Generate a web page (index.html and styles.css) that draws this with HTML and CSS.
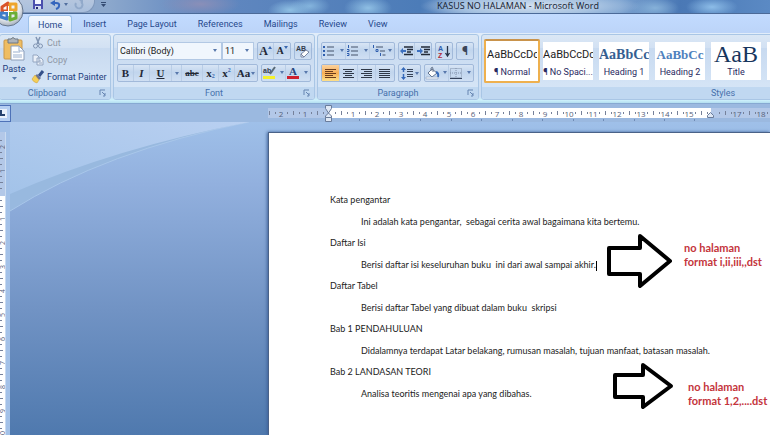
FILE: index.html
```html
<!DOCTYPE html>
<html lang="id">
<head>
<meta charset="utf-8">
<title>KASUS NO HALAMAN - Microsoft Word</title>
<link rel="stylesheet" href="styles.css">
</head>
<body>
<div class="app">
  <header class="titlebar">
    <button class="orb" aria-label="Office">
      <svg width="32" height="32" viewBox="0 0 32 32">
        <defs><radialGradient id="orb" cx=".45" cy=".35" r=".65"><stop offset="0" stop-color="#fff"/><stop offset=".7" stop-color="#e3e7ec"/><stop offset="1" stop-color="#a5afbc"/></radialGradient></defs>
        <circle cx="16" cy="16" r="15" fill="url(#orb)" stroke="#66768c"/>
        <g fill="none" stroke-width="3" stroke-linejoin="round">
          <path d="M10 12l6-4v8h-6z" stroke="#d9532a"/>
          <path d="M18 9h6v6h-6z" stroke="#eea52b"/>
          <path d="M9 18h6v6l-6-2z" stroke="#3e7dc9"/>
          <path d="M18 18h6v5l-6 2z" stroke="#6cae35"/>
        </g>
        <path d="M16.500 11v10M12 16.500h9" stroke="#fff"/>
      </svg>
    </button>
    <div class="quick">
      <button class="plain" aria-label="Save"><svg width="12" height="12" viewBox="0 0 12 12"><path d="M1 0h10v9H1z" fill="#4b50ae"/><path d="M3 0h6v4H3z" fill="#f2f5ff"/><path d="M3 6h6v3H3z" fill="#d4dcf0"/><path d="M4 7h2v2H4z" fill="#252b70"/></svg></button>
      <button class="plain" aria-label="Undo"><svg width="18" height="11" viewBox="0 0 18 11"><path d="M3 3h3q4 0 3 3 0 2-3 3" fill="none" stroke="#3465bd" stroke-width="2"/><path d="M0 3l5-3v6z" fill="#3465bd"/><path d="M14 3h4l-2 3z" fill="#526f9f"/></svg></button>
      <button class="plain" aria-label="Redo"><svg width="11" height="11" viewBox="0 0 11 11"><path d="M7 2a3.500 3.500 0 1 1-5 1" fill="none" stroke="#91a9ca" stroke-width="2"/><path d="M5 0h4v4z" fill="#91a9ca"/></svg></button>
    </div>
    <button class="plain more" aria-label="Customize toolbar"><svg width="5" height="6" viewBox="0 0 5 6"><path d="M0 0h5v1H0zM0 2h5L2.500 5z" fill="#344b72"/></svg></button>
    <h1 class="title">KASUS NO HALAMAN - Microsoft Word</h1>
  </header>

  <nav class="tabs">
    <a class="tab active" href="#">Home</a>
    <a class="tab" href="#">Insert</a>
    <a class="tab" href="#">Page Layout</a>
    <a class="tab" href="#">References</a>
    <a class="tab" href="#">Mailings</a>
    <a class="tab" href="#">Review</a>
    <a class="tab" href="#">View</a>
  </nav>

  <div class="ribbon">
    <section class="group clipboard">
      <div class="tools">
        <button class="plain paste">
          <svg width="22" height="24" viewBox="0 0 22 24"><rect x="1" y="3" width="18" height="19" rx="1" fill="#efbd62" stroke="#c9974a"/><path d="M5 2h3q2-3 4 0h3v4H5z" fill="#aeb4bb" stroke="#6f7983"/><path d="M8 9h8l5 5v9H8z" fill="#fff" stroke="#8b9db8"/><path d="M16 9v5h5M10 15h7M10 18h9M10 20h9" fill="none" stroke="#9bb0cf"/></svg>
          <span>Paste</span>
          <svg width="5" height="3" viewBox="0 0 5 3"><path d="M0 0h5L2.500 3z" fill="#5b7fb0"/></svg>
        </button>
        <div class="clip-list">
          <button class="plain off"><svg width="12" height="12" viewBox="0 0 12 12"><path d="M4 0l3 7M8 0L5 7" stroke="#8195b3" stroke-width="1.500"/><circle cx="3.500" cy="9" r="2" fill="none" stroke="#8195b3"/><circle cx="8.500" cy="9" r="2" fill="none" stroke="#8195b3"/></svg>Cut</button>
          <button class="plain off"><svg width="12" height="12" viewBox="0 0 12 12"><path d="M1 1h4l2 2v5H1zM5 4h4l2 2v5H5z" fill="#e9eff8" stroke="#93a5c0"/><path d="M7 7h2M7 9h3" stroke="#93a5c0"/></svg>Copy</button>
          <button class="plain"><svg width="12" height="12" viewBox="0 0 12 12"><path d="M11 0L7 5" stroke="#34508a" stroke-width="3"/><path d="M5 3l4 4-2 2-4-4z" fill="#6a7396"/><path d="M3 4l4 5-2 3q-4-1-5-4z" fill="#f5cf58" stroke="#c79b35" stroke-width=".5"/></svg>Format Painter</button>
        </div>
      </div>
      <footer class="caption"><span>Clipboard</span><button class="plain launch" aria-label="Clipboard options"><svg width="6" height="6" viewBox="0 0 6 6"><path d="M0 5V0h5M2 2l3 3M5 3v3H3" fill="none" stroke="#6685b1"/></svg></button></footer>
    </section>

    <section class="group font">
      <div class="rows">
        <div class="row">
          <div class="combos">
            <label class="combo wide"><select aria-label="Font"><option>Calibri (Body)</option></select></label>
            <label class="combo"><select aria-label="Font size"><option>11</option></select></label>
          </div>
          <div class="set">
            <button class="b serif big" aria-label="Grow font">A<svg width="4" height="3" viewBox="0 0 4 3"><path d="M0 3h4L2 0z" fill="#3b68b0"/></svg></button>
            <button class="b serif small" aria-label="Shrink font">A<svg width="4" height="3" viewBox="0 0 4 3"><path d="M0 0h4L2 3z" fill="#3b68b0"/></svg></button>
          </div>
          <div class="set">
            <button class="b" aria-label="Clear formatting"><svg width="14" height="13" viewBox="0 0 14 13"><text x="0" y="6" class="ab">AB</text><path d="M5 9l5-4 3 2-5 5H5z" fill="#fff" stroke="#7986a3"/><path d="M5 9l3 3" stroke="#7986a3"/></svg></button>
          </div>
        </div>
        <div class="row">
          <div class="set">
            <button class="b serif">B</button>
            <button class="b serif italic">I</button>
            <button class="b serif under">U</button>
            <button class="b arrow" aria-label="Underline style"><svg width="4" height="3" viewBox="0 0 4 3"><path d="M0 0h4L2 3z" fill="#5878ac"/></svg></button>
            <button class="b serif strike">abc</button>
            <button class="b serif">x<sub>2</sub></button>
            <button class="b serif">x<sup>2</sup></button>
            <button class="b serif case">Aa<svg width="4" height="3" viewBox="0 0 4 3"><path d="M0 0h4L2 3z" fill="#5878ac"/></svg></button>
          </div>
          <div class="set">
            <button class="b pick" aria-label="Highlight"><svg width="22" height="14" viewBox="0 0 22 14"><text x="0" y="7" class="ab">ab</text><path d="M12 1L7 8" stroke="#596a78" stroke-width="2"/><path d="M0 10h12v3H0z" fill="#f3f02c"/><path d="M17 5h4l-2 3z" fill="#5878ac"/></svg></button>
            <button class="b pick" aria-label="Font color"><svg width="22" height="14" viewBox="0 0 22 14"><text x="2" y="9" class="fc">A</text><path d="M0 10h12v3H0z" fill="#ce1f2e"/><path d="M17 5h4l-2 3z" fill="#5878ac"/></svg></button>
          </div>
        </div>
      </div>
      <footer class="caption"><span>Font</span><button class="plain launch" aria-label="Font options"><svg width="6" height="6" viewBox="0 0 6 6"><path d="M0 5V0h5M2 2l3 3M5 3v3H3" fill="none" stroke="#6685b1"/></svg></button></footer>
    </section>

    <section class="group paragraph">
      <div class="rows">
        <div class="row">
          <div class="set">
            <button class="b list" aria-label="Bullets"><svg width="21" height="12" viewBox="0 0 21 12"><path d="M0 1h2v2H0zM0 5h2v2H0zM0 9h2v2H0z" fill="#2f5eae"/><path d="M4 2h7M4 6h7M4 10h7" stroke="#44536b"/><path d="M17 4h4l-2 3z" fill="#5878ac"/></svg></button>
            <button class="b list" aria-label="Numbering"><svg width="21" height="12" viewBox="0 0 21 12"><path d="M1.500 0v3M0 4.500h2v2H0M0 8.500h2v2H0" fill="none" stroke="#2f5eae"/><path d="M4 2h7M4 6h7M4 10h7" stroke="#44536b"/><path d="M17 4h4l-2 3z" fill="#5878ac"/></svg></button>
            <button class="b list" aria-label="Multilevel list"><svg width="21" height="12" viewBox="0 0 21 12"><path d="M1.500 0v3M4 4.500h2v2H4zM8.500 8v3" fill="none" stroke="#2f5eae"/><path d="M4 2h7M8 6h5M10.500 10h3" stroke="#44536b"/><path d="M16 4h4l-2 3z" fill="#5878ac"/></svg></button>
          </div>
          <div class="set">
            <button class="b" aria-label="Decrease indent"><svg width="13" height="11" viewBox="0 0 13 11"><path d="M4 1h9M7 3.500h6M7 6h4M4 8.500h9" stroke="#232b39" stroke-width="1.500"/><path d="M0 5l3-3v2h3v2H3v2z" fill="#3d70c0"/></svg></button>
            <button class="b" aria-label="Increase indent"><svg width="13" height="11" viewBox="0 0 13 11"><path d="M4 1h9M7 3.500h6M7 6h4M4 8.500h9" stroke="#232b39" stroke-width="1.500"/><path d="M6 5L3 2v2H0v2h3v2z" fill="#3d70c0"/></svg></button>
          </div>
          <div class="set">
            <button class="b" aria-label="Sort"><svg width="12" height="13" viewBox="0 0 12 13"><text x="0" y="6" class="sa">A</text><text x="0" y="13" class="sz">Z</text><path d="M9.500 1v9M7.500 8l2 3 2-3" fill="none" stroke="#263247" stroke-width="1.300"/></svg></button>
          </div>
          <div class="set">
            <button class="b pilcrow">¶</button>
          </div>
        </div>
        <div class="row">
          <div class="set">
            <button class="b align on" aria-label="Align left"><svg width="12" height="11" viewBox="0 0 12 11"><path d="M0 1.500h11M0 3.500h8M0 5.500h11M0 7.500h8M0 9.500h11" stroke="#6b3c1c"/></svg></button>
            <button class="b align" aria-label="Center"><svg width="12" height="11" viewBox="0 0 12 11"><path d="M0 1.500h11M2 3.500h7M0 5.500h11M2 7.500h7M0 9.500h11" stroke="#2f3847"/></svg></button>
            <button class="b align" aria-label="Align right"><svg width="12" height="11" viewBox="0 0 12 11"><path d="M0 1.500h11M3 3.500h8M0 5.500h11M3 7.500h8M0 9.500h11" stroke="#2f3847"/></svg></button>
            <button class="b align" aria-label="Justify"><svg width="12" height="11" viewBox="0 0 12 11"><path d="M0 1.500h11M0 3.500h11M0 5.500h11M0 7.500h11M0 9.500h11" stroke="#2f3847"/></svg></button>
          </div>
          <div class="set">
            <button class="b spacing" aria-label="Line spacing"><svg width="18" height="13" viewBox="0 0 18 13"><path d="M2.500 2v9" stroke="#3569b9" stroke-width="1.500" stroke-dasharray="3 2"/><path d="M0 3l2.500-3L5 3zM0 10l2.500 3L5 10z" fill="#3569b9"/><path d="M6 2.500h6M6 4.500h6M6 7.500h6M6 9.500h6" stroke="#384458"/><path d="M14 5h4l-2 3z" fill="#5878ac"/></svg></button>
          </div>
          <div class="set">
            <button class="b pick" aria-label="Shading"><svg width="22" height="13" viewBox="0 0 22 13"><path d="M2 6l4-4 5 4-5 4z" fill="#fff" stroke="#66758e"/><path d="M5 4V1q2-2 2 1v3" fill="none" stroke="#66758e"/><path d="M10 5q3 1 2 5" fill="none" stroke="#3569b9" stroke-width="2"/><path d="M0 10h12v2H0z" fill="#eef3fa" stroke="#8296b5" stroke-width=".5"/><path d="M17 4h4l-2 3z" fill="#5878ac"/></svg></button>
            <button class="b pick" aria-label="Borders"><svg width="22" height="13" viewBox="0 0 22 13"><path d="M.5 1.500h11v9H.5zM6 1v10M0 6h12" fill="none" stroke="#8392ab" stroke-dasharray="1 1"/><path d="M0 11.500h12" stroke="#35435c"/><path d="M17 4h4l-2 3z" fill="#5878ac"/></svg></button>
          </div>
        </div>
      </div>
      <footer class="caption"><span>Paragraph</span><button class="plain launch" aria-label="Paragraph options"><svg width="6" height="6" viewBox="0 0 6 6"><path d="M0 5V0h5M2 2l3 3M5 3v3H3" fill="none" stroke="#6685b1"/></svg></button></footer>
    </section>

    <section class="group styles">
      <div class="gallery">
        <button class="style chosen"><span class="sample">AaBbCcDc</span><span>¶ Normal</span></button>
        <button class="style"><span class="sample">AaBbCcDc</span><span>¶ No Spaci...</span></button>
        <button class="style"><span class="sample h1">AaBbCc</span><span>Heading 1</span></button>
        <button class="style"><span class="sample h2">AaBbCc</span><span>Heading 2</span></button>
        <button class="style"><span class="sample ttl">AaB</span><span>Title</span></button>
        <button class="style"><span class="sample sub">AaBbCc</span><span>Subtitle</span></button>
      </div>
      <footer class="caption"><span>Styles</span></footer>
    </section>
  </div>

  <main class="work">
    <div class="ruler-row">
      <button class="tabstop" aria-label="Tab stop"><svg width="5" height="6" viewBox="0 0 5 6"><path d="M1 0v5h4" fill="none" stroke="#26436f" stroke-width="2"/></svg></button>
      <div class="hruler">
        <i>2</i><i>1</i><i></i><i>1</i><i>2</i><i>3</i><i>4</i><i>5</i><i>6</i><i>7</i><i>8</i><i>9</i><i>10</i><i>11</i><i>12</i><i>13</i><i>14</i><i>15</i><i></i><i>17</i><i>18</i><i></i>
        <svg class="markers" width="400" height="18" viewBox="0 0 400 18"><path d="M1.500.5h6v3l-3 4.500-3-4.500zM1.500 12.500v-1.500l3-3 3 3v1.500zM1.500 12.500h6v4h-6zM383.500 12.500v-2l3-3 3 3v2z" fill="#dfe8f5" stroke="#6a7c9b"/><path d="M35.500 14v2M65.500 14v2M96.500 14v2M127.500 14v2M157.500 14v2M188.500 14v2M218.500 14v2M249.500 14v2M279.500 14v2M310.500 14v2M340.500 14v2M370.500 14v2" stroke="#6f8bb5"/></svg>
      </div>
    </div>
    <div class="body">
      <div class="vruler">
        <i>2</i><i>1</i><i></i><i>1</i><i>2</i><i>3</i><i>4</i><i>5</i><i>6</i><i>7</i><i>8</i><i>9</i><i>10</i>
      </div>
      <div class="canvas">
        <svg class="swoosh" width="240" height="90" viewBox="0 0 240 90"><defs><linearGradient id="sw" x1="0" y1="1" x2="1" y2="0"><stop offset="0" stop-color="#a3c3e9"/><stop offset="1" stop-color="#b9d0f1"/></linearGradient></defs><path d="M0 0h239Q95 29 0 89z" fill="#98b9df"/><path d="M0 89Q95 29 239 0" fill="none" stroke="#a9c7ea"/><path d="M0 0h239Q105 26 0 72z" fill="url(#sw)"/></svg>
        <article class="page">
          <h2>Kata pengantar</h2>
          <p>Ini adalah kata pengantar,&nbsp; sebagai cerita awal bagaimana kita bertemu.</p>
          <h2>Daftar Isi</h2>
          <p>Berisi daftar isi keseluruhan buku&nbsp; ini dari awal sampai akhir.<span class="caret"></span></p>
          <h2>Daftar Tabel</h2>
          <p>Berisi daftar Tabel yang dibuat dalam buku&nbsp; skripsi</p>
          <h2>Bab 1 PENDAHULUAN</h2>
          <p>Didalamnya terdapat Latar belakang, rumusan masalah, tujuan manfaat, batasan masalah.</p>
          <h2>Bab 2 LANDASAN TEORI</h2>
          <p>Analisa teoritis mengenai apa yang dibahas.</p>
          <svg class="arrow-one" width="66" height="56" viewBox="0 0 66 56"><path d="M3 15h31V3l30 25-30 25V41H3z" fill="#fff" stroke="#000" stroke-width="4" stroke-linejoin="round"/></svg>
          <div class="note note-one">no halaman<br>format i,ii,iii,,dst</div>
          <svg class="arrow-two" width="62" height="48" viewBox="0 0 62 48"><path d="M3 13h28V3l28 21-28 21V35H3z" fill="#fff" stroke="#000" stroke-width="4" stroke-linejoin="round"/></svg>
          <div class="note note-two">no halaman<br>format 1,2,....dst</div>
        </article>
      </div>
    </div>
  </main>
</div>
</body>
</html>
```
FILE: styles.css
```css
* { box-sizing: border-box; }
body { margin: 0; font: 9px/12px Roboto, "Open Sans", sans-serif; color: #1d3c7c; }
.app { display: flex; flex-direction: column; height: 100vh; overflow: hidden; }
button { font: inherit; color: inherit; margin: 0; padding: 0; cursor: default; }
svg { flex: none; overflow: visible; }
.plain { display: flex; align-items: center; border: 0; background: none; }

.titlebar {
  position: relative; z-index: 2; display: flex; height: 14px; flex: none;
  border-bottom: 1px solid #4b6a98;
  background:
    radial-gradient(ellipse 22px 10px at 290px 10px, #8fc0e4, transparent),
    radial-gradient(ellipse 20px 10px at 310px 6px, #84b4dd, transparent),
    radial-gradient(ellipse 24px 12px at 368px 8px, #8fbfe4, transparent),
    radial-gradient(ellipse 40px 12px at 200px 4px, #8a8fb8, transparent),
    radial-gradient(ellipse 110px 14px at 530px 6px, #d3e0ef, #a9c4e2 60%, transparent),
    radial-gradient(ellipse 26px 10px at 712px 7px, #8dbde8, transparent),
    radial-gradient(ellipse 24px 10px at 655px 8px, #86b1d9, transparent),
    linear-gradient(90deg, #93a8c5, #8ba7cc 110px, #6288c0 200px, #4c7cb8 420px, #8fb0d8 480px, #7ba2d0 620px, #4a78b5 680px, #5b8ac4);
}
.orb { position: absolute; left: -8px; top: -5px; width: 32px; height: 32px; border: 0; background: none; }
.quick { display: flex; align-items: flex-start; gap: 6px; margin-left: 20px; padding: 0 9px 0 12px; height: 13px; border: 1px solid #8098bb; border-width: 0 1px 1px 0; border-radius: 0 0 12px 0; background: linear-gradient(#b5c6de, #a9bfdd); }
.more { margin-left: 6px; height: 10px; }
.title { position: absolute; left: 437px; top: 0; margin: 0; font: 400 9px/12px "Open Sans", sans-serif; color: #14202f; white-space: nowrap; }

.tabs { display: flex; gap: 1px; height: 19px; flex: none; padding: 1px 0 0 28px; background: linear-gradient(#c2dbff, #bcd4f8); }
.tab { padding: 0 10px; line-height: 19px; color: #26488c; text-decoration: none; white-space: nowrap; }
.tab.active { border: 1px solid #9dc1ea; border-bottom: 0; border-radius: 3px 3px 0 0; padding: 0 9px; line-height: 18px; background: linear-gradient(#f4f9ff, #dfe9f7); }

.ribbon { display: flex; gap: 2px; height: 70px; flex: none; padding: 1px 0 3px; background: linear-gradient(#e1edfa, #c9dcf2 90%, #cdf1fb 96%, #b3def0); overflow: hidden; }
.group { display: flex; flex-direction: column; flex: none; border: 1px solid #a9c6e5; border-radius: 3px; background: linear-gradient(#dbe7f5 0, #d2e1f3 20%, #c8daf0 21%, #d9e8f8 100%); overflow: hidden; }
.clipboard { width: 112px; margin-left: -1px; }
.font { width: 202px; }
.paragraph { width: 162px; }
.styles { width: 484px; }
.caption { display: flex; height: 12px; margin-top: auto; background: #c0d8f1; color: #4670ab; line-height: 12px; }
.caption span { flex: 1; text-align: center; }
.launch { width: 0; margin-right: 10px; margin-left: -10px; }
.clipboard .caption span { padding-right: 16px; }

.tools { display: flex; gap: 7px; padding: 2px 0 0 3px; }
.paste { flex-direction: column; width: 22px; gap: 2px; }
.paste span { line-height: 12px; }
.clip-list { display: flex; flex-direction: column; gap: 5px; }
.clip-list .plain { gap: 3px; height: 12px; white-space: nowrap; }
.clip-list .off { color: #8f98a6; }

.rows { display: flex; flex-direction: column; gap: 4px; padding: 7px 3px 0; }
.row { display: flex; gap: 3px; }
.set { display: flex; height: 18px; border: 1px solid #a1b9da; border-radius: 2px; background: linear-gradient(#d8e5f5, #c1d5ed 45%, #cfdff3); }
.b { display: flex; align-items: center; justify-content: center; width: 16px; border: 0; border-right: 1px solid #b9cde6; background: none; color: #222836; }
.b:last-child { border-right: 0; }
.combos { display: flex; height: 18px; }
.combo { position: relative; width: 32px; }
.combo.wide { width: 105px; }
.combo::after { content: ""; position: absolute; right: 5px; top: 7px; border: 2px solid transparent; border-top: 3px solid #5878ac; border-bottom: 0; }
select { appearance: none; width: 100%; height: 18px; padding: 0 2px; border: 1px solid #b2c8e4; border-radius: 0; background: #f0f6fd; font: inherit; color: #222; }
.serif { font-family: "Liberation Serif", serif; font-weight: 700; font-size: 11px; }
.big { font-size: 12px; }
.small { font-size: 10px; }
.big svg, .small svg { align-self: flex-start; margin-top: 3px; }
.italic { font-style: italic; }
.under { width: 22px; text-decoration: underline; }
.arrow { width: 10px; }
.strike { width: 21px; font-size: 9px; text-decoration: line-through; }
.serif sub, .serif sup { font-size: 6px; color: #3b68b0; line-height: 6px; }
.serif sub { align-self: flex-end; margin-bottom: 2px; }
.serif sup { align-self: flex-start; margin-top: 2px; }
.case { width: 22px; gap: 1px; }
.pick { width: 24px; }
.list { width: 24px; }
.align { width: 18px; }
.spacing { width: 21px; }
.pilcrow { font-size: 12px; font-weight: 700; color: #3b4456; }
.on { background: linear-gradient(#fbd3a0, #f7ae55 50%, #fde08a); }
.ab { font: 700 7px "Liberation Sans", sans-serif; fill: #333c4c; }
.fc { font: 700 11px "Liberation Serif", serif; fill: #27457f; }
.sa { font: 700 7px "Liberation Sans", sans-serif; fill: #2f5eae; }
.sz { font: 700 7px "Liberation Sans", sans-serif; fill: #b02a3a; }

.gallery { display: flex; padding: 4px 0 0 2px; }
.style { display: flex; flex-direction: column; flex: none; align-items: center; width: 56px; height: 44px; padding: 0 0 2px; border: 3px solid transparent; background: #fff; background-clip: padding-box; color: #28285e; white-space: nowrap; }
.style > span { width: 100%; overflow: hidden; }
.style.chosen { padding: 1px 1px 3px; border: 2px solid #eeb04e; border-top-color: #c9934b; border-radius: 2px; }
.sample { height: 24px; line-height: 26px; font-size: 11px; color: #1d1d1d; }
.sample.h1 { font: 700 14px/26px "Liberation Serif", serif; color: #365f91; }
.sample.h2 { font: 700 13px/26px "Liberation Serif", serif; color: #4f81bd; }
.sample.ttl { font: 24px/24px "Liberation Serif", serif; color: #17365d; }
.sample.sub { font: italic 12px/26px "Liberation Serif", serif; color: #4f81bd; }

.work { display: flex; flex-direction: column; flex: 1; min-height: 0; }
.ruler-row { display: flex; align-items: center; justify-content: space-between; height: 19px; flex: none; border-top: 1px solid #87a9d2; background: #9bb9e0; overflow: hidden; }
.tabstop { display: flex; align-items: center; width: 11px; height: 17px; border: 1px solid #4e72b8; border-left: 0; box-shadow: inset -3px 0 #b5cff2, inset 0 3px #b5cff2, inset 0 -3px #b5cff2; background: #e9f1fb; }
.hruler { position: relative; display: flex; flex: none; width: calc(100% - 268px); height: 10px; padding-left: 1px; background: linear-gradient(90deg, #b3c8e8 61px, #fff 61px, #fff 443px, #b3c8e8 443px); }
.hruler i { flex: none; width: 24px; font: 8px/11px "Open Sans", sans-serif; color: #56617a; text-align: center;
  background: linear-gradient(#76819a, #76819a) 0 3px / 1px 4px no-repeat, linear-gradient(#76819a, #76819a) 6px 4px / 1px 2px no-repeat, linear-gradient(#76819a, #76819a) 18px 4px / 1px 2px no-repeat; }
.markers { position: absolute; left: 56px; top: -3px; }

.body { display: flex; flex: 1; min-height: 0; overflow: hidden; background: #a3c1e8; }
.vruler { width: 6px; margin: 10px 4px 0 0; padding-top: 3px; border-right: 1px solid #c9daf0; background: linear-gradient(#b3c8e8 64px, #fff 64px); overflow: hidden; }
.vruler i { display: flex; align-items: center; justify-content: center; width: 5px; height: 24px; font: 7px/5px "Open Sans", sans-serif; color: #56617a; writing-mode: vertical-rl; transform: rotate(180deg);
  background: linear-gradient(#76819a, #76819a) 100% 0 / 3px 1px no-repeat, linear-gradient(#76819a, #76819a) 100% 6px / 2px 1px no-repeat, linear-gradient(#76819a, #76819a) 100% 18px / 2px 1px no-repeat; }
.canvas { position: relative; display: flex; flex: 1; min-width: 0; background: linear-gradient(#9fc0e9, #92b0de 20%, #7193c4 60%, #4f79ae); }
.swoosh { position: absolute; left: 0; top: 0; }
.page { position: relative; flex: 1; margin: 10px 0 0 258px; padding: 56px 0 0 61px; border: 1px solid #4a6288; border-width: 1px 0 0 1px; background: #fff; box-shadow: -1px 0 3px #3f639a; font-family: Lato, "Open Sans", sans-serif; color: #222; white-space: nowrap; }
.page h2 { margin: 0; font-size: 9px; line-height: 22px; font-weight: 400; }
.page p { margin: 0 0 0 31px; font-size: 9px; line-height: 21px; }
.caret { display: inline-block; width: 1px; height: 10px; background: #000; vertical-align: middle; }
.arrow-one { position: absolute; left: 337px; top: 100px; }
.arrow-two { position: absolute; left: 343px; top: 229px; }
.note { position: absolute; font-size: 11px; line-height: 14px; font-weight: 700; color: #c4343c; }
.note-one { left: 415px; top: 108px; }
.note-two { left: 419px; top: 247px; }
```
